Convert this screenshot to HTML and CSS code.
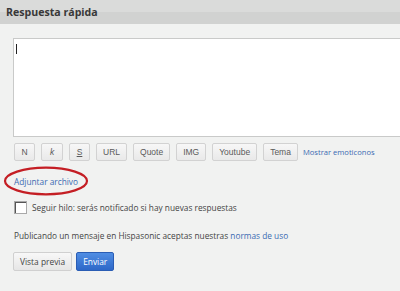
FILE: index.html
```html
<!DOCTYPE html>
<html lang="es">
  <head>
    <meta charset="UTF-8" />
    <title>Respuesta rápida</title>
    <link rel="stylesheet" href="styles.css">
  </head>
  <body>
    <div class="panel">
      <h2 class="panel-title">Respuesta rápida</h2>
      <div class="panel-body">
        <div class="editor"><span class="caret"></span></div>

        <div class="toolbar">
          <button class="tb-btn sq">N</button>
          <button class="tb-btn sq italic">k</button>
          <button class="tb-btn sq under">S</button>
          <button class="tb-btn">URL</button>
          <button class="tb-btn">Quote</button>
          <button class="tb-btn">IMG</button>
          <button class="tb-btn">Youtube</button>
          <button class="tb-btn">Tema</button>
          <a class="link emo" href="#">Mostrar emoticonos</a>
        </div>

        <div class="attach">
          <a class="link" href="#">Adjuntar archivo</a>
          <svg class="circle" width="86" height="30" viewBox="0 0 86 30">
            <ellipse cx="43" cy="15" rx="41" ry="13.3" fill="none" stroke="#c41e24" stroke-width="2.2"/>
          </svg>
        </div>

        <label class="follow">
          <span class="checkbox"></span>
          Seguir hilo: serás notificado si hay nuevas respuestas
        </label>

        <p class="terms">Publicando un mensaje en Hispasonic aceptas nuestras <a class="link" href="#">normas de uso</a></p>

        <div class="actions">
          <button class="btn">Vista previa</button>
          <button class="btn primary">Enviar</button>
        </div>
      </div>
    </div>
  </body>
</html>
```

FILE: styles.css
```css
body {
  margin: 0;
  background-color: #f1f2f1;
  font-family: "Open Sans", Arial, sans-serif;
  font-size: 8.3px;
  color: #444;
  overflow: hidden;
}

.panel-title {
  margin: 0;
  height: 24px;
  line-height: 24px;
  padding-left: 6px;
  font-size: 10.6px;
  font-weight: bold;
  color: #383838;
  background: linear-gradient(#dadbda 0, #dadbda 50%, #d1d2d1 50%, #d1d2d1 100%);
}

.panel-body {
  padding: 14px 0 0 13px;
}

.editor {
  height: 97px;
  margin-right: -20px;
  background-color: #fff;
  border: 1px solid #c9cac9;
  position: relative;
}

.caret {
  position: absolute;
  left: 2px;
  top: 5px;
  width: 1px;
  height: 10px;
  background-color: #222;
}

.toolbar {
  display: flex;
  align-items: center;
  gap: 6px;
  margin-top: 6px;
  padding-left: 1px;
  height: 18px;
  white-space: nowrap;
}

.tb-btn {
  height: 18px;
  padding: 0 6px;
  font-family: "Liberation Sans", Arial, sans-serif;
  font-size: 8.5px;
  color: #5a5a5a;
  background: linear-gradient(#f7f7f7, #e9e9e9);
  border: 1px solid #d2d2d2;
  border-radius: 2px;
}

.tb-btn.sq { padding: 0; width: 21px; }
.toolbar .tb-btn:nth-child(2) { width: 22px; }

.italic { font-style: italic; }
.under { text-decoration: underline; }

.link {
  color: #3b6bb1;
  text-decoration: none;
}

.emo {
  margin-left: -1px;
  font-size: 7.6px;
}

.attach {
  position: relative;
  margin-top: 15px;
  padding-left: 1px;
  height: 12px;
  line-height: 12px;
}

.circle {
  position: absolute;
  left: -10px;
  top: -10px;
}

.follow {
  display: flex;
  align-items: center;
  gap: 5px;
  margin-top: 13px;
  padding-left: 1px;
  height: 13px;
}

.checkbox {
  width: 11px;
  height: 11px;
  background-color: #fff;
  border: 1px solid #a9a9a9;
  box-shadow: inset 1px 1px 0 #555;
}

.terms {
  margin: 16px 0 0 1px;
  line-height: 12px;
}

.actions {
  display: flex;
  gap: 4px;
  margin-top: 10px;
}

.btn {
  height: 19px;
  padding: 0 6px;
  font-family: "Open Sans", Arial, sans-serif;
  font-size: 8.4px;
  color: #444;
  background: linear-gradient(#f8f8f8, #e6e6e6);
  border: 1px solid #d0d0d0;
  border-radius: 2px;
}

.btn.primary {
  color: #fff;
  background: linear-gradient(#4f8de3, #2e68c8);
  border-color: #2a5db4;
}
```
